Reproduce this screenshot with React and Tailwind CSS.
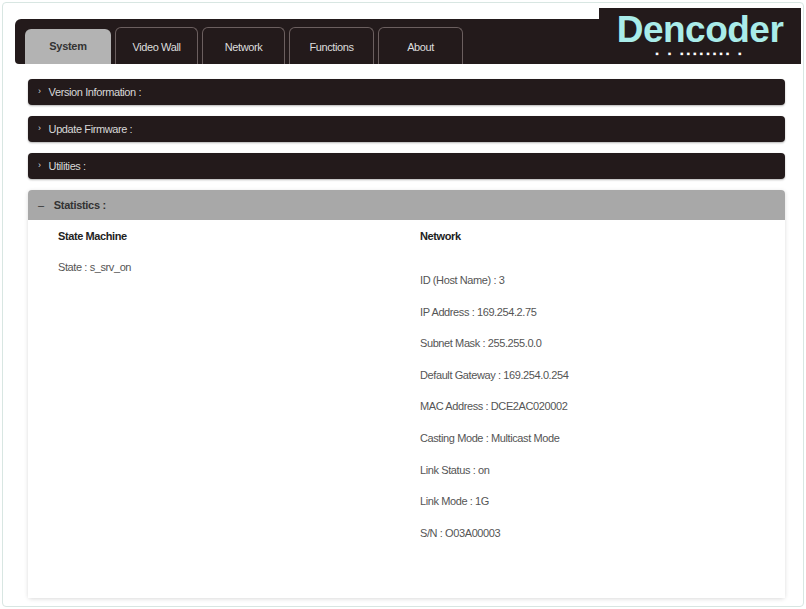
export default function App() {
  const tabs = [["Video Wall", "w-[83px]"], ["Network", "w-[83px]"], ["Functions", "w-[85px]"], ["About", "w-[85px]"]];
  const bars = ["Version Information :", "Update Firmware :", "Utilities :"];
  const net = ["ID (Host Name) : 3", "IP Address : 169.254.2.75", "Subnet Mask : 255.255.0.0", "Default Gateway : 169.254.0.254", "MAC Address : DCE2AC020002", "Casting Mode : Multicast Mode", "Link Status : on", "Link Mode : 1G", "S/N : O03A00003"];
  return (
    <div className="w-[806px] h-[609px] bg-white p-[2px]" style={{ fontFamily: '"Liberation Sans", Arial, sans-serif' }}>
      <div className="h-full border border-[#d8e6e2] rounded-sm pl-[12px] pr-[2px] pt-[5px]">
        <div className="relative h-[56px] flex items-end">
          <div className="absolute left-0 right-0 top-[11px] bottom-0 bg-[#231a1b] rounded-tl-md rounded-bl-sm"></div>
          <div className="absolute right-0 top-0 w-[202px] h-[56px] bg-[#231a1b] flex flex-col items-center pt-[2px]">
            <span className="text-[#a9ece9] font-bold text-[37px] leading-[40px] tracking-[-0.5px]">Dencoder</span>
            <span className="text-white text-[10px] leading-[8px] tracking-[3px] font-bold">▪ ▪ ▪▪▪▪▪▪▪▪ ▪</span>
          </div>
          <div className="relative flex gap-[4px] ml-[10px] h-[35px]">
            <div className="w-[86px] bg-[#b3b3b3] rounded-t-md flex items-center justify-center text-[11px] font-bold text-[#333] tracking-[-0.3px]">System</div>
            {tabs.map(([t, w]) => (
              <div key={t} className={`${w} border border-b-0 border-[#6b5f5f] rounded-t-md flex items-center justify-center text-[11px] text-[#ddd] tracking-[-0.4px] -mt-[2px] pt-[2px]`}>{t}</div>
            ))}
          </div>
        </div>
        <div className="mt-[15px] ml-[13px] mr-[16px] flex flex-col gap-[11px]">
          {bars.map((b) => (
            <div key={b} className="h-[26px] bg-[#231a1b] rounded-sm flex items-center pl-[10px] text-[11px] text-[#d8d8d8] tracking-[-0.4px] shadow-[0_1px_2px_rgba(0,0,0,0.3)]">
              <span className="mr-[8px] text-[9px]">›</span>{b}
            </div>
          ))}
          <div className="shadow-[0_1px_4px_rgba(0,0,0,0.15)] rounded-sm">
            <div className="h-[30px] bg-[#a8a8a8] rounded-t-sm flex items-center pl-[10px] text-[11px] font-bold text-[#333] tracking-[-0.3px]">
              <span className="mr-[10px] font-normal">–</span>Statistics :
            </div>
            <div className="h-[378px] bg-white grid grid-cols-[362px_1fr] pl-[30px] pt-[8px] text-[11px] text-[#555] tracking-[-0.4px]">
              <div>
                <div className="font-bold text-[#222] h-[31px]">State Machine</div>
                <div>State : s_srv_on</div>
              </div>
              <div>
                <div className="font-bold text-[#222] h-[46px]">Network</div>
                <div className="flex flex-col gap-[18.6px]">
                  {net.map((n) => <div key={n} className="leading-[13px]">{n}</div>)}
                </div>
              </div>
            </div>
          </div>
        </div>
      </div>
    </div>
  );
}
